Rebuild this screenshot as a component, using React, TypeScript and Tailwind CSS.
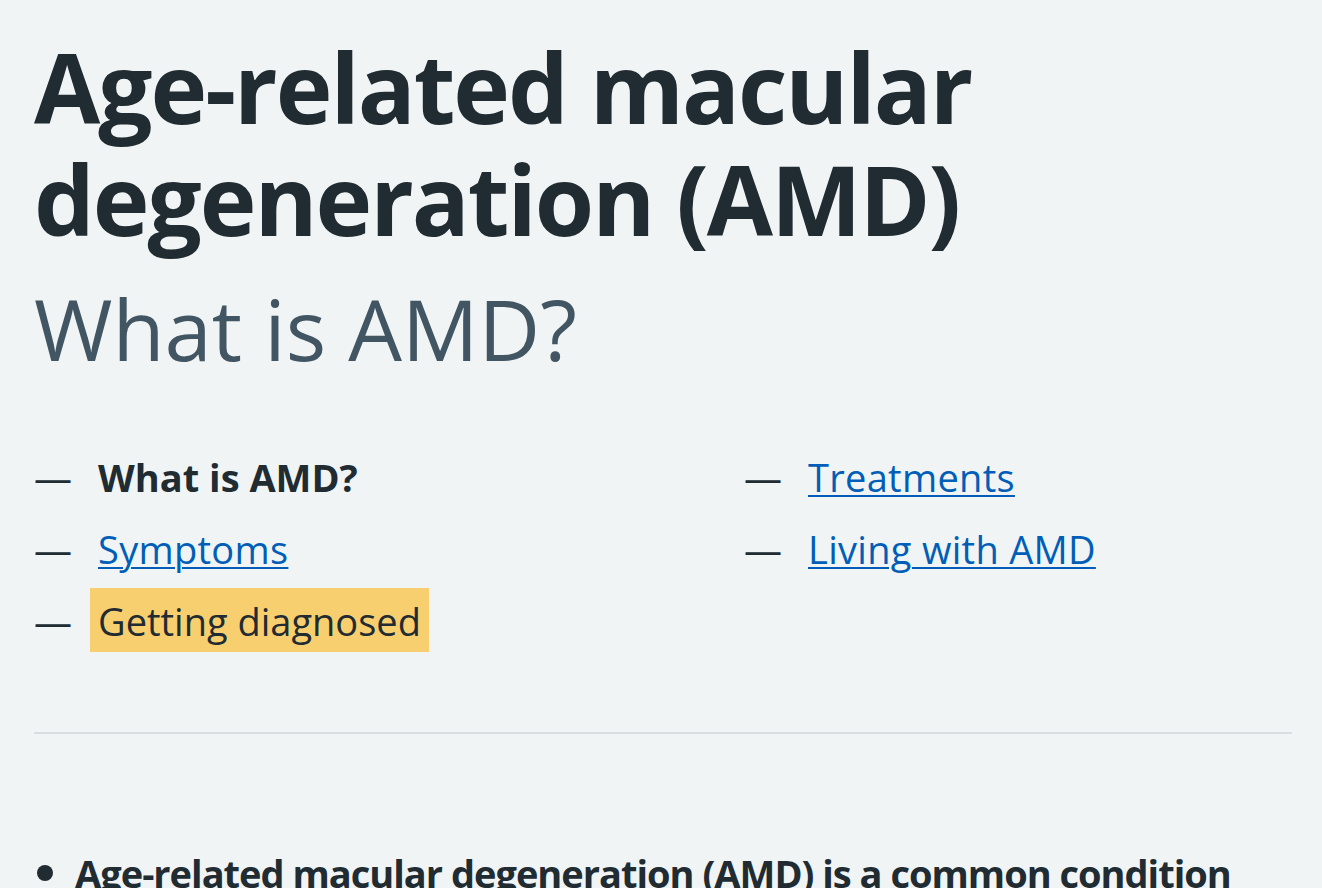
const contentsLeft = [
  { label: "What is AMD?", current: true },
  { label: "Symptoms", href: "#symptoms" },
  { label: "Getting diagnosed", focused: true, href: "#getting-diagnosed" },
];

const contentsRight = [
  { label: "Treatments", href: "#treatments" },
  { label: "Living with AMD", href: "#living-with-amd" },
];

type Item = { label: string; href?: string; current?: boolean; focused?: boolean };

const ContentsItem = ({ item }: { item: Item }) => (
  <li className="relative pl-[64px] mb-[16px] leading-[56px]">
    <span aria-hidden className="absolute left-0 top-0 text-[#212b32]">
      —
    </span>
    {item.current ? (
      <span className="font-bold text-[#212b32]">{item.label}</span>
    ) : item.focused ? (
      <a
        href={item.href}
        className="bg-[#f8cf6f] text-[#212b32] no-underline -mx-[8px] px-[8px] pt-[7px] pb-[5px]"
      >
        {item.label}
      </a>
    ) : (
      <a
        href={item.href}
        className="text-[#005eb8] tracking-[0.3px] underline decoration-[2px] underline-offset-[3px]"
      >
        {item.label}
      </a>
    )}
  </li>
);

export default function App() {
  return (
    <div className="min-h-screen bg-[#f0f4f5] text-[#212b32] font-['Open_Sans',sans-serif] pl-[34px] pr-[30px] pt-[31px] overflow-hidden">
      <h1 className="text-[96px] leading-[112px] font-bold tracking-[-2px]">
        Age-related macular degeneration (AMD)
      </h1>
      <p className="mt-[25px] text-[85px] leading-[96px] text-[#425563]">What is AMD?</p>

      <nav aria-label="Pages in this guide" className="mt-[73px] text-[38px]">
        <div className="flex">
          <ul className="w-[710px]">
            {contentsLeft.map((item) => (
              <ContentsItem key={item.label} item={item} />
            ))}
          </ul>
          <ul className="flex-1">
            {contentsRight.map((item) => (
              <ContentsItem key={item.label} item={item} />
            ))}
          </ul>
        </div>
      </nav>

      <hr className="mt-[67px] border-0 border-t-2 border-[#d8dde0]" />

      <ul className="mt-[109px] list-disc pl-[41px] text-[38px] leading-[56px] font-bold tracking-[-1px] marker:text-[44px]">
        <li>Age-related macular degeneration (AMD) is a common condition that affects the middle part of your vision.</li>
      </ul>
    </div>
  );
}
